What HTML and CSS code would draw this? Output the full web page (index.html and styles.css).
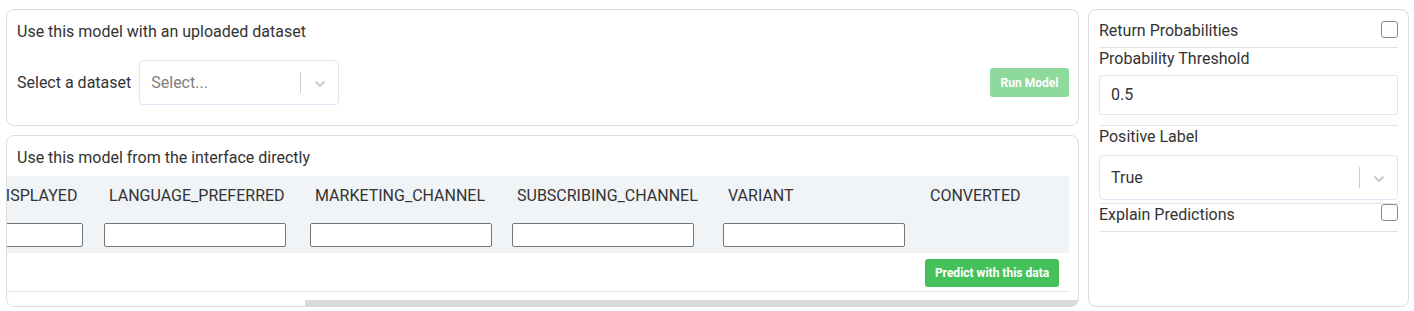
FILE: index.html
```html
<!DOCTYPE html>
<html lang="en">
<head>
  <meta charset="UTF-8">
  <meta name="viewport" content="width=device-width, initial-scale=1.0">
  <title>Model Inference</title>
  <link rel="stylesheet" href="styles.css">
</head>
<body>
  <div class="layout">
    <div class="main">
      <div class="card upload-card">
        <div class="card-title">Use this model with an uploaded dataset</div>
        <div class="upload-row">
          <span class="field-label">Select a dataset</span>
          <div class="select dataset-select">
            <span class="select-value placeholder">Select...</span>
            <span class="select-sep"></span>
            <span class="select-arrow">
              <svg width="12" height="8" viewBox="0 0 12 8"><path d="M1.5 1.5 L6 6 L10.5 1.5" fill="none" stroke="#cccccc" stroke-width="2"/></svg>
            </span>
          </div>
          <button class="btn btn-disabled run-btn">Run Model</button>
        </div>
      </div>

      <div class="card direct-card">
        <div class="card-title">Use this model from the interface directly</div>
        <div class="scroll-view">
          <div class="sheet">
            <div class="table">
              <div class="col" style="width: 203px"><div class="col-label">AGE_GROUP</div><input class="cell-input" type="text"></div>
              <div class="col" style="width: 203px"><div class="col-label">LANGUAGE_DISPLAYED</div><input class="cell-input" type="text"></div>
              <div class="col" style="width: 206px"><div class="col-label">LANGUAGE_PREFERRED</div><input class="cell-input" type="text"></div>
              <div class="col" style="width: 202px"><div class="col-label">MARKETING_CHANNEL</div><input class="cell-input" type="text"></div>
              <div class="col" style="width: 211px"><div class="col-label">SUBSCRIBING_CHANNEL</div><input class="cell-input" type="text"></div>
              <div class="col" style="width: 202px"><div class="col-label">VARIANT</div><input class="cell-input" type="text"></div>
              <div class="col" style="width: 144px"><div class="col-label">CONVERTED</div></div>
            </div>
            <div class="sheet-footer">
              <button class="btn btn-green">Predict with this data</button>
            </div>
          </div>
        </div>
        <div class="scrollbar"><div class="scroll-thumb"></div></div>
      </div>
    </div>

    <div class="card side-card">
      <div class="opt-row check-row">
        <span class="field-label">Return Probabilities</span>
        <span class="checkbox"></span>
      </div>
      <div class="opt-row threshold-row">
        <div class="field-label">Probability Threshold</div>
        <div class="text-box">0.5</div>
      </div>
      <div class="opt-row label-row">
        <div class="field-label">Positive Label</div>
        <div class="select label-select">
          <span class="select-value">True</span>
          <span class="select-sep"></span>
          <span class="select-arrow">
            <svg width="12" height="8" viewBox="0 0 12 8"><path d="M1.5 1.5 L6 6 L10.5 1.5" fill="none" stroke="#cccccc" stroke-width="2"/></svg>
          </span>
        </div>
      </div>
      <div class="opt-row check-row explain-row">
        <span class="field-label">Explain Predictions</span>
        <span class="checkbox"></span>
      </div>
    </div>
  </div>
</body>
</html>
```

FILE: styles.css
```css
body {
  margin: 0;
  padding: 9px 5px 0 6px;
  font-family: Roboto, "Liberation Sans", sans-serif;
  font-size: 16px;
  color: #333;
  background-color: #fff;
}

.layout {
  display: flex;
  gap: 9px;
  align-items: flex-start;
}

.main {
  width: 1073px;
  display: flex;
  flex-direction: column;
  gap: 9px;
}

.card {
  border: 1px solid #dcdcdc;
  border-radius: 8px;
  background-color: #fff;
  box-sizing: border-box;
}

.card-title {
  line-height: 22px;
  padding: 0 10px;
}

.field-label {
  line-height: 20px;
}

/* uploaded dataset */

.upload-card {
  height: 117px;
  padding-top: 11px;
}

.upload-row {
  display: flex;
  align-items: center;
  padding: 0 9px 0 10px;
  margin-top: 17px;
}

.upload-row .field-label {
  margin-right: 8px;
}

.select {
  display: flex;
  align-items: center;
  border: 1px solid #dbe7f3;
  border-radius: 4px;
  box-sizing: border-box;
  background-color: #fff;
}

.select-value {
  flex: 1;
  padding-left: 11px;
}

.placeholder {
  color: #808080;
}

.select-sep {
  width: 1px;
  height: 21px;
  background-color: #cccccc;
}

.select-arrow {
  width: 37px;
  display: flex;
  justify-content: center;
  padding-top: 2px;
}

.dataset-select {
  width: 200px;
  height: 45px;
}

.btn {
  border: none;
  border-radius: 3px;
  color: #fff;
  font-family: Roboto, "Liberation Sans", sans-serif;
  font-size: 12px;
  font-weight: bold;
  cursor: pointer;
}

.btn-disabled {
  background-color: #8ed99c;
}

.run-btn {
  margin-left: auto;
  width: 79px;
  height: 29px;
}

.btn-green {
  background-color: #45c15c;
  width: 134px;
  height: 28px;
}

/* direct interface */

.direct-card {
  height: 172px;
  padding-top: 11px;
  overflow: hidden;
  position: relative;
}

.scroll-view {
  display: flex;
  justify-content: flex-end;
  overflow: hidden;
  margin-top: 7px;
}

.sheet {
  flex: none;
  padding-right: 9px;
}

.table {
  display: flex;
  background-color: #f0f4f7;
  padding: 9px 0 6px;
}

.col {
  flex: none;
}

.col-label {
  line-height: 22px;
  padding-left: 5px;
  white-space: nowrap;
}

.cell-input {
  display: block;
  width: 182px;
  height: 24px;
  margin-top: 16px;
  border: 1px solid #767676;
  border-radius: 2px;
  box-sizing: border-box;
  background-color: #fff;
}

.sheet-footer {
  display: flex;
  justify-content: flex-end;
  padding: 6px 10px 4px 0;
  border-bottom: 1px solid #e6e6e6;
}

.scrollbar {
  position: absolute;
  left: 0;
  right: 0;
  bottom: 0;
  height: 6px;
}

.scroll-thumb {
  margin-left: 298px;
  height: 6px;
  background-color: #d9d9d9;
}

/* options panel */

.side-card {
  width: 322px;
  height: 298px;
  padding: 10px 10px 0;
}

.side-card .field-label {
  padding-top: 1px;
}

.opt-row {
  border-bottom: 1px solid #e3e3e3;
}

.check-row {
  display: flex;
  justify-content: space-between;
  align-items: flex-start;
  padding-bottom: 6px;
}

.checkbox {
  width: 17px;
  height: 17px;
  border: 1px solid #8a8a8a;
  border-radius: 3px;
  box-sizing: border-box;
  margin-top: 1px;
}

.threshold-row {
  padding-bottom: 10px;
}

.text-box {
  height: 40px;
  margin-top: 6px;
  border: 1px solid #dbe7f3;
  border-radius: 2px;
  box-sizing: border-box;
  padding-left: 11px;
  line-height: 38px;
}

.label-row {
  padding-bottom: 3px;
}

.label-select {
  height: 45px;
  margin-top: 8px;
}

.explain-row .checkbox {
  margin-top: 0;
}
```
